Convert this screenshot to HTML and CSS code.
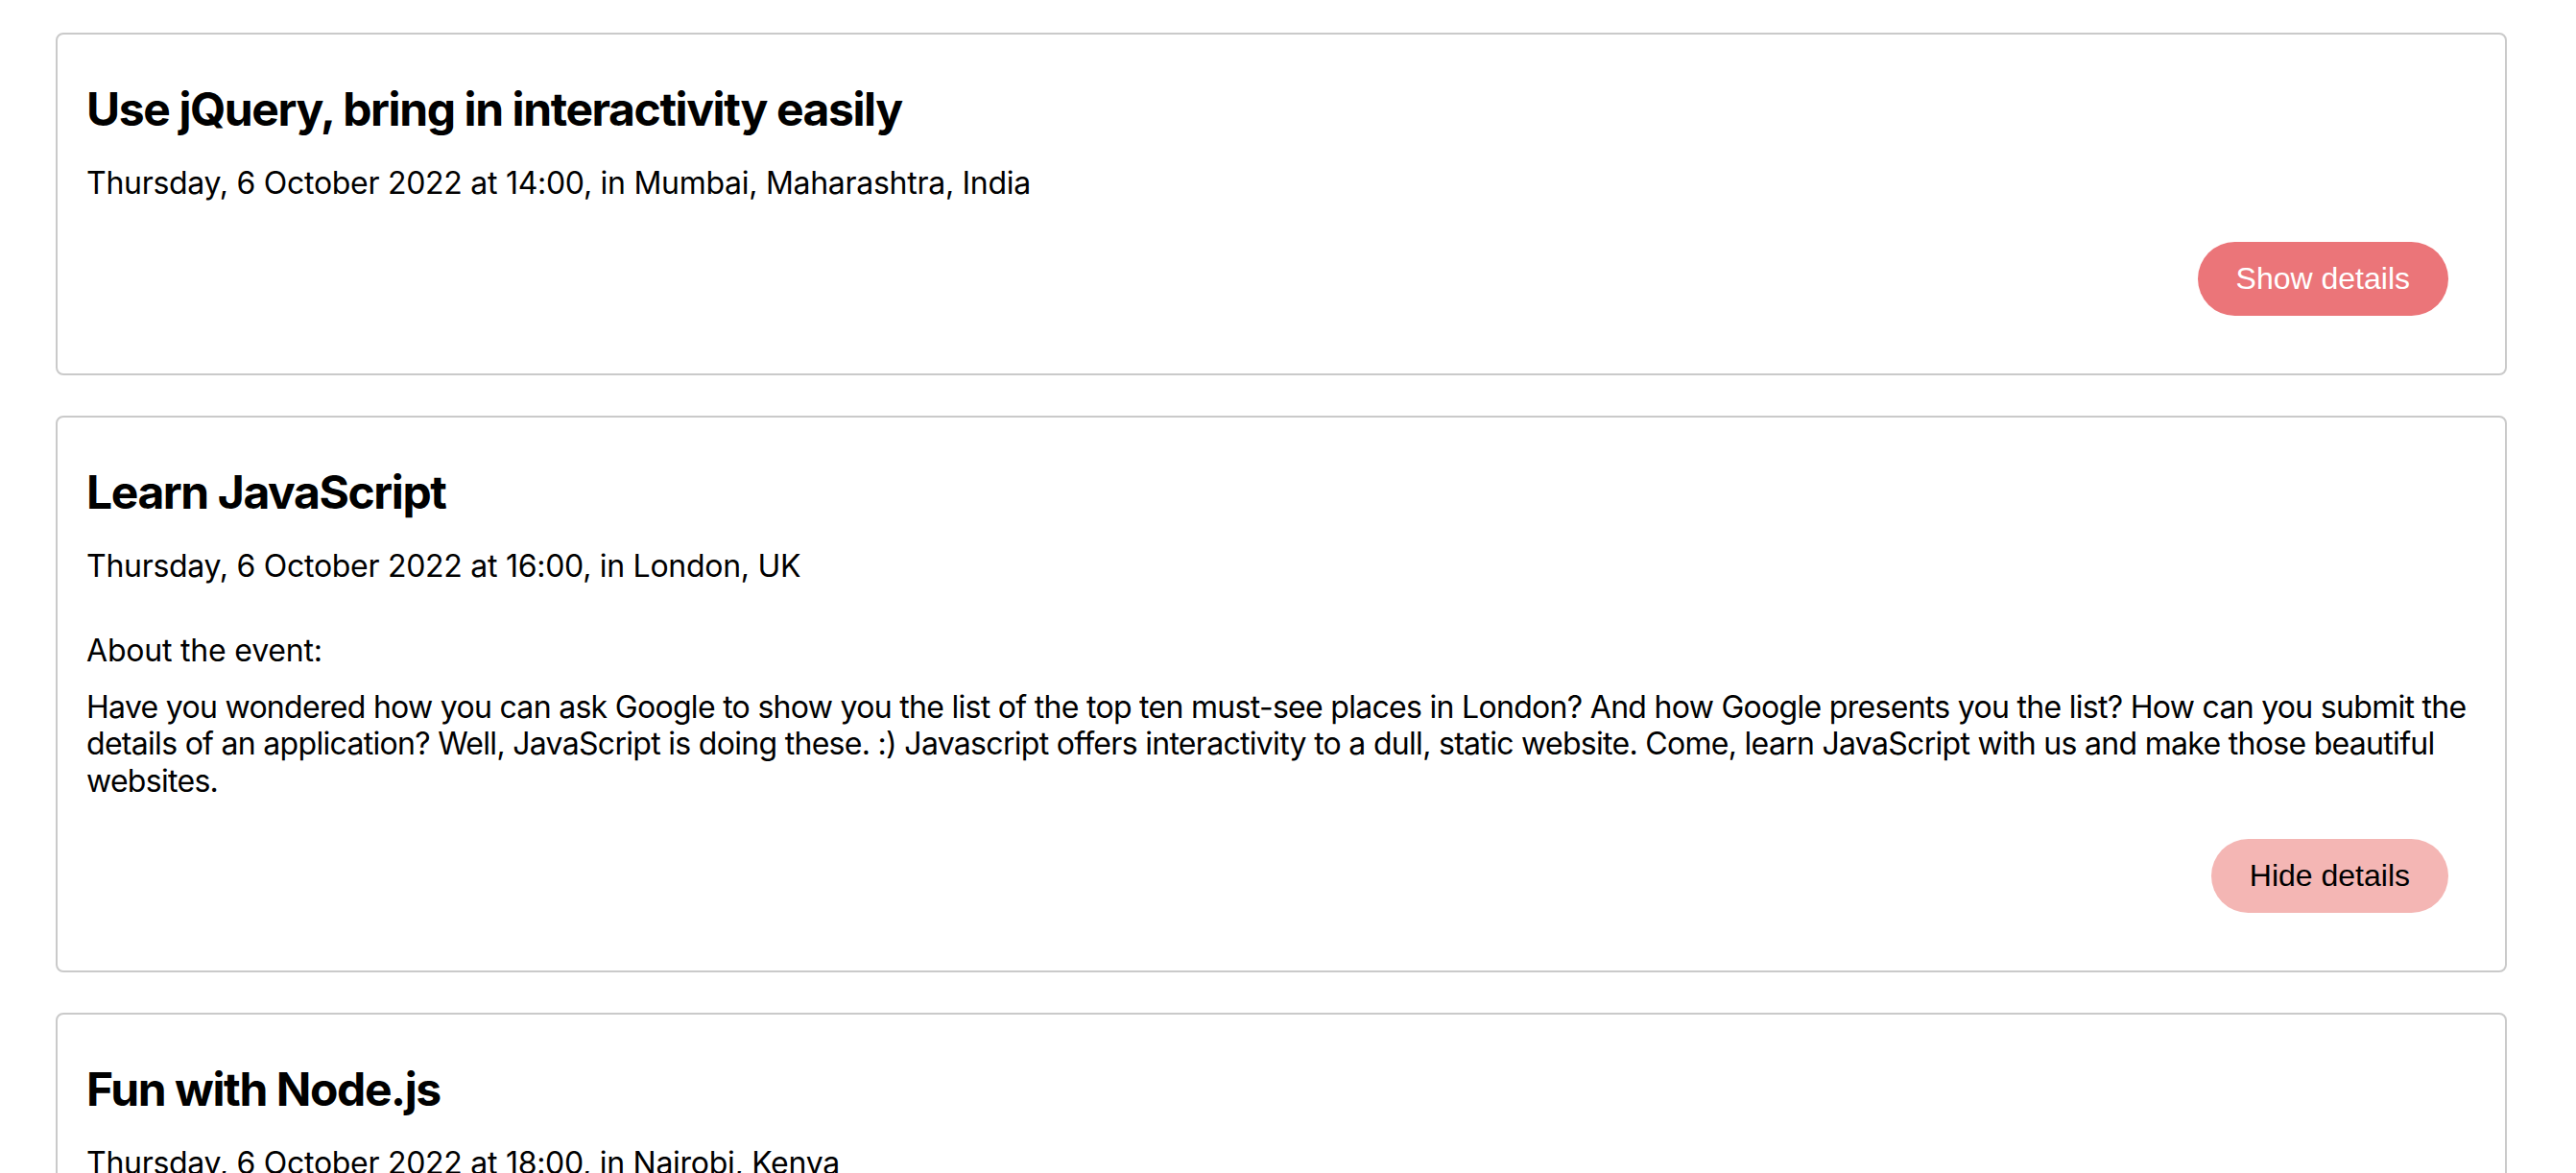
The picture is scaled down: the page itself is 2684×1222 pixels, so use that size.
FILE: index.html
```html
<!DOCTYPE html>
<html lang="en">
<head>
<meta charset="utf-8">
<title>Events</title>
<link rel="stylesheet" href="styles.css">
</head>
<body>
<main class="events">
  <article class="card">
    <h2 class="title">Use jQuery, bring in interactivity easily</h2>
    <p class="date">Thursday, 6 October 2022 at 14:00, in Mumbai, Maharashtra, India</p>
    <div class="actions">
      <button class="btn btn-show">Show details</button>
    </div>
  </article>
  <article class="card">
    <h2 class="title">Learn JavaScript</h2>
    <p class="date">Thursday, 6 October 2022 at 16:00, in London, UK</p>
    <div class="details">
      <p class="about">About the event:</p>
      <p class="desc">Have you wondered how you can ask Google to show you the list of the top ten must-see places in London? And how Google presents you the list? How can you submit the details of an application? Well, JavaScript is doing these. :) Javascript offers interactivity to a dull, static website. Come, learn JavaScript with us and make those beautiful websites.</p>
    </div>
    <div class="actions actions-open">
      <button class="btn btn-hide">Hide details</button>
    </div>
  </article>
  <article class="card">
    <h2 class="title">Fun with Node.js</h2>
    <p class="date">Thursday, 6 October 2022 at 18:00, in Nairobi, Kenya</p>
    <div class="actions">
      <button class="btn btn-show">Show details</button>
    </div>
  </article>
</main>
</body>
</html>
```
FILE: styles.css
```css
html, body {
  background: #ffffff;
}
body {
  margin: 0;
  padding: 34px 72px 40px 58px;
  font-family: Inter, "Noto Sans", sans-serif;
  color: #000;
}
.events {
  display: flex;
  flex-direction: column;
  gap: 42px;
}
.card {
  border: 2px solid #cacaca;
  border-radius: 8px;
  padding: 0 30px;
}
.title {
  font-size: 48px;
  line-height: 57px;
  font-weight: 700;
  letter-spacing: -1.4px;
  margin: 49px 0 0;
}
.date {
  font-size: 32px;
  line-height: 38px;
  letter-spacing: -0.28px;
  margin: 30px 0 0;
}
.details {
  margin-top: 50px;
  font-size: 32px;
  line-height: 38.5px;
}
.about {
  margin: 0;
  letter-spacing: -0.2px;
}
.desc {
  margin: 20px 0 0;
  letter-spacing: -0.7px;
}
.actions {
  display: flex;
  justify-content: flex-end;
  margin-top: 42px;
  padding: 0 29px 60px 0;
}
.actions-open {
  margin-top: 41px;
}
.btn {
  font-family: "Liberation Sans", Arial, sans-serif;
  font-size: 32px;
  line-height: 37px;
  padding: 20px 40px;
  border: none;
  border-radius: 40px;
  cursor: pointer;
}
.btn-show {
  background: #eb7579;
  color: #ffffff;
}
.btn-hide {
  background: #f4b6b4;
  color: #000000;
}
```
